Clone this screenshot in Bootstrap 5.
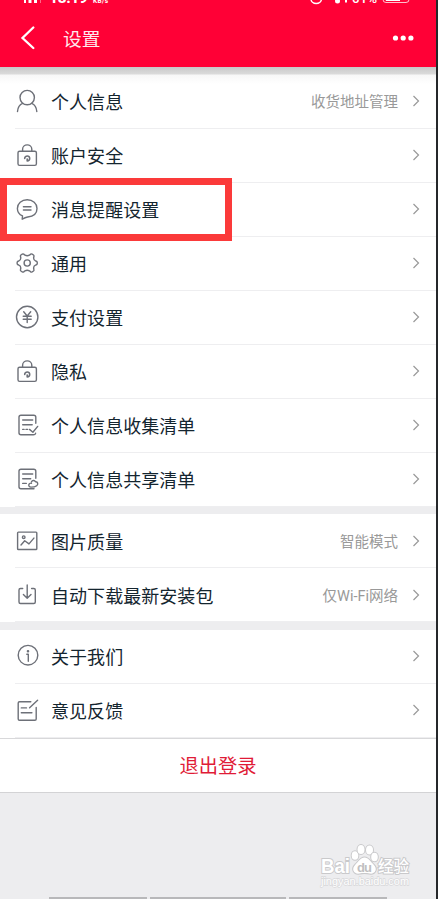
<!DOCTYPE html>
<html lang="zh-CN">
<head>
<meta charset="utf-8">
<meta name="viewport" content="width=device-width, initial-scale=1">
<title>设置</title>
<link href="https://cdn.jsdelivr.net/npm/bootstrap@5.3.0/dist/css/bootstrap.min.css" rel="stylesheet">
<style>
body{font-family:"Noto Sans CJK SC",sans-serif;background:#ededef;color:#14252f}
.phone{height:899px;border-right:2px solid #25272a;background:#ededef}
.topbar{height:67px;background:#ff0036;color:#fff}
.status{height:10px}
.topnav{height:57px;padding:0 22px 2px 20px}
.page-title{font-size:18.7px;line-height:26px;margin-left:27px;color:#ffe9ed}
.topshade{height:8px;background:linear-gradient(#c9c9c9,#dadada 85%,#f3f3f3)}
.firstglow{background:linear-gradient(#f7f7f7,#fff 9px)}
.setting{height:54px;padding:0 16px 2px 15px}
.media-group .setting{padding-bottom:0}
.setting::after{content:"";position:absolute;left:15px;right:0;bottom:0;height:1px;background:#eeeef0}
.setting .ico{width:24px;height:24px;flex:none;margin-right:12px;fill:none;stroke:#6d7078;stroke-width:1.4;stroke-linecap:round;stroke-linejoin:round}
.label{font-size:18px;line-height:26px;letter-spacing:.05px}
.val{font-family:Roboto,"Noto Sans CJK SC",sans-serif;font-size:14.5px;line-height:22px;padding-top:4px;color:#999;margin-right:14px}
.chev{width:8px;height:12px;flex:none;fill:none;stroke:#999;stroke-width:1.2}
.sep{height:8px;background:#ededef}
.sep-first{height:7px}
.logout{height:55px;font-size:19.3px;color:#e01b37;border-top:1px solid #d8d8da;border-bottom:1px solid #d3d3d5;border-radius:0}
.marker{left:0;top:178px;width:232px;height:63px;border:7px solid #fb3a3a}
.brand{left:316px;top:840px}
.navbars{left:49px;bottom:0;gap:3px}
.navbars span{height:2px;background:#b8b8ba}
.w-a{width:98px}.w-b{width:136px}
</style>
<script src="https://cdn.jsdelivr.net/npm/bootstrap@5.3.0/dist/js/bootstrap.bundle.min.js"></script>
</head>
<body class="overflow-hidden">
<svg class="d-none">
<symbol id="user" viewBox="0 0 24 24"><circle cx="12.2" cy="8.6" r="7.2"/><path d="M2.5 22.5c.3-4.2 2-7 5.2-8.2M21.8 22.5c-.3-4.2-2-7-5.2-8.2"/></symbol>
<symbol id="lock" viewBox="0 0 24 24"><rect x="3" y="8.2" width="18.4" height="14.2" rx="1.6"/><path d="M7.6 8V6.200c0-5.800 9.200-5.800 9.200 0V8"/><path d="M9.700 15.400c.1-3.400 5.200-3.200 5 .2 0 1.400-1 2.300-2.500 2.300v-1.800" stroke-width="1.600"/></symbol>
<symbol id="chat" viewBox="0 0 24 24"><path d="M7.200 22.200l.3-3.300C4.400 17.500 2.400 14.700 2.400 11.400C2.400 6.500 6.600 2.800 12.200 2.800S22 6.500 22 11.400c0 5.200-4.300 8-9.300 8.600-2 .3-3.500 1-5.500 2.200z"/><path d="M8.400 9.800h7.600M8.400 13h7.600"/></symbol>
<symbol id="gear" viewBox="0 0 24 24"><circle cx="12.200" cy="12" r="3.100"/><path d="M7.300 3.100Q8 2.700 8.700 3.100L10 4.200Q12.200 5.200 14.400 4.200L15.700 3.100Q16.400 2.700 17.100 3.100L18.500 4Q19.200 4.600 18.900 5.500L18.600 7Q18.700 9.200 20.500 9.900L21.800 10.500Q22.300 11 22.300 12T21.800 13.500L20.500 14.100Q18.700 14.800 18.600 17L18.900 18.500Q19.200 19.400 18.500 20L17.100 20.900Q16.400 21.300 15.700 20.900L14.400 19.800Q12.200 18.800 10 19.800L8.700 20.900Q8 21.300 7.300 20.900L5.900 20Q5.200 19.400 5.500 18.500L5.800 17Q5.700 14.800 3.900 14.100L2.600 13.500Q2.100 13 2.100 12T2.600 10.500L3.900 9.900Q5.700 9.200 5.800 7L5.500 5.500Q5.200 4.600 5.900 4Z"/></symbol>
<symbol id="yen" viewBox="0 0 24 24"><circle cx="12.200" cy="12" r="10.700"/><path d="M8.700 6.800l3.500 4.200 3.500-4.200M12.200 11v6.500M8.200 11.300h8M8.200 14.200h8"/></symbol>
<symbol id="listcheck" viewBox="0 0 24 24"><path d="M20.800 10.300V4.200Q20.800 2.200 18.800 2.200H6Q4 2.200 4 4.200V19.800Q4 21.800 6 21.800H18.300Q20.300 21.800 20.600 20.300M7.700 7h10M7.700 11.700h9.500M7.700 16.400h1.400M11 16.400h1.600M14.500 16.400l3.400 2.800 4.800-5.800"/></symbol>
<symbol id="listshare" viewBox="0 0 24 24"><path d="M20.800 11.200V4.200Q20.800 2.200 18.800 2.200H6Q4 2.200 4 4.200V19.800Q4 21.800 6 21.800H19M7.700 7h10M7.700 11.700h8M7.700 16.400h3.600"/><path d="M16.500 14.700c1-2 3.300-1.300 4 .1 2.500-.2 2.900 2.700 1.200 3.900-1.600 1.300-3.900 1.400-5.700 1.400-3.500-.1-2.500-4.600.5-3.900"/></symbol>
<symbol id="pic" viewBox="0 0 24 24"><rect x="2.600" y="3.100" width="19.200" height="17.400" rx=".8"/><circle cx="8.700" cy="8.200" r="1.300"/><path d="M6 16l3.700-4.300 4.300 3.200 4.900-5.800"/></symbol>
<symbol id="down" viewBox="0 0 24 24"><path d="M7.700 5.500H5.500Q4 5.500 4 7v12Q4 20.500 5.500 20.500h13.300q1.500 0 1.500-1.500V7q0-1.500-1.500-1.500h-2.200M12.200 2v13.200M8.400 11.500l3.800 3.800 3.800-3.800"/></symbol>
<symbol id="info" viewBox="0 0 24 24"><circle cx="13" cy="11.200" r="9.800"/><path d="M11.800 10.200h1.500v7"/><circle cx="13" cy="7.200" r=".6" fill="#6d7078"/></symbol>
<symbol id="edit" viewBox="0 0 24 24"><path d="M15.800 3.800H4.500Q3.200 3.800 3.200 5.100V20.900Q3.200 22.200 4.500 22.200H19.900Q21.200 22.200 21.200 20.900V9.500M14.600 9.700l8-7.500M6.300 9.900h5.200M6.300 14.800h10.600"/></symbol>
<symbol id="arrow" viewBox="0 0 8 12"><path d="M1.500 1l5 5-5 5"/></symbol>
</svg>
<main class="phone position-relative overflow-hidden">
<header class="topbar">
<svg class="status d-block w-100" viewBox="0 0 436 10" preserveAspectRatio="xMinYMin" fill="#fff">
<path d="M24 0h2v3h-2zM28.500 0h3v3h-3zM34 0h3v3h-3z"/><path d="M40 0h1v3h-1z" opacity=".4"/>
<text x="49" y="3" font-family="Roboto" font-weight="700" font-size="16" textLength="39">18:19</text>
<text x="93" y="3" font-family="Roboto" font-weight="700" font-size="6.500" textLength="15">KB/s</text>
<path d="M311 -1a5.200 4.500 0 0 0 10.400 0" fill="none" stroke="#fff" stroke-width="1.500"/>
<circle cx="337.500" cy="1" r="2.500"/><path d="M345 0h2v2.500h-2z"/>
<text x="352" y="2.500" font-family="Roboto" font-weight="500" font-size="13" textLength="25">61%</text>
<rect x="383" y="-7" width="26" height="9.500" rx="3" fill="none" stroke="#fff" stroke-opacity=".75"/><path d="M385 -2h15v3h-14z"/>
</svg>
<div class="topnav d-flex align-items-center">
<svg width="16" height="24" viewBox="0 0 16 24" fill="none" stroke="#fff" stroke-width="2.300" stroke-linecap="round"><path d="M13.300 1.500L2.500 12l10.800 10"/></svg>
<h1 class="page-title fw-normal mb-0">设置</h1>
<svg class="ms-auto" width="22" height="6" viewBox="0 0 22 6" fill="#fff"><circle cx="3.500" cy="3" r="2.600"/><circle cx="11.200" cy="3" r="2.600"/><circle cx="18.900" cy="3" r="2.600"/></svg>
</div>
</header>
<div class="topshade"></div>
<section class="bg-white">
<div class="setting firstglow position-relative d-flex align-items-center"><svg class="ico"><use href="#user"/></svg><span class="label">个人信息</span><span class="val ms-auto">收货地址管理</span><svg class="chev"><use href="#arrow"/></svg></div>
<div class="setting position-relative d-flex align-items-center"><svg class="ico"><use href="#lock"/></svg><span class="label">账户安全</span><svg class="chev ms-auto"><use href="#arrow"/></svg></div>
<div class="setting position-relative d-flex align-items-center"><svg class="ico"><use href="#chat"/></svg><span class="label">消息提醒设置</span><svg class="chev ms-auto"><use href="#arrow"/></svg></div>
<div class="setting position-relative d-flex align-items-center"><svg class="ico"><use href="#gear"/></svg><span class="label">通用</span><svg class="chev ms-auto"><use href="#arrow"/></svg></div>
<div class="setting position-relative d-flex align-items-center"><svg class="ico"><use href="#yen"/></svg><span class="label">支付设置</span><svg class="chev ms-auto"><use href="#arrow"/></svg></div>
<div class="setting position-relative d-flex align-items-center"><svg class="ico"><use href="#lock"/></svg><span class="label">隐私</span><svg class="chev ms-auto"><use href="#arrow"/></svg></div>
<div class="setting position-relative d-flex align-items-center"><svg class="ico"><use href="#listcheck"/></svg><span class="label">个人信息收集清单</span><svg class="chev ms-auto"><use href="#arrow"/></svg></div>
<div class="setting position-relative d-flex align-items-center"><svg class="ico"><use href="#listshare"/></svg><span class="label">个人信息共享清单</span><svg class="chev ms-auto"><use href="#arrow"/></svg></div>
</section>
<div class="sep sep-first"></div>
<section class="bg-white media-group">
<div class="setting position-relative d-flex align-items-center"><svg class="ico"><use href="#pic"/></svg><span class="label">图片质量</span><span class="val ms-auto">智能模式</span><svg class="chev"><use href="#arrow"/></svg></div>
<div class="setting position-relative d-flex align-items-center"><svg class="ico"><use href="#down"/></svg><span class="label">自动下载最新安装包</span><span class="val ms-auto">仅Wi-Fi网络</span><svg class="chev"><use href="#arrow"/></svg></div>
</section>
<div class="sep"></div>
<section class="bg-white">
<div class="setting position-relative d-flex align-items-center"><svg class="ico"><use href="#info"/></svg><span class="label">关于我们</span><svg class="chev ms-auto"><use href="#arrow"/></svg></div>
<div class="setting position-relative d-flex align-items-center"><svg class="ico"><use href="#edit"/></svg><span class="label">意见反馈</span><svg class="chev ms-auto"><use href="#arrow"/></svg></div>
</section>
<button type="button" class="logout d-flex w-100 align-items-center justify-content-center bg-white border-start-0 border-end-0 p-0">退出登录</button>
<div class="marker position-absolute"></div>
<svg class="brand position-absolute" width="100" height="50" viewBox="0 0 100 50" fill="#fff" stroke="#c9c9cb" stroke-width="2" paint-order="stroke" font-family="Liberation Sans">
<ellipse cx="39" cy="15.500" rx="3.300" ry="4.300"/><ellipse cx="45" cy="9.500" rx="3.500" ry="4.500"/><ellipse cx="53.500" cy="10" rx="3.500" ry="4.500"/><ellipse cx="58.500" cy="17" rx="3.300" ry="4.300"/>
<path d="M48.500 17.500c4 0 6 4 9 7 5 5 1 10-4 9-3-.6-7-.6-10 0-5 1-9-4-4-9 3-3 5-7 9-7z"/>
<text x="5" y="33" font-weight="700" font-size="21" textLength="29" lengthAdjust="spacingAndGlyphs">Bai</text>
<text x="41" y="32" font-weight="700" font-size="13" textLength="15" fill="#bfbfc1" stroke="none">du</text>
<text x="62" y="32" font-family="Noto Sans CJK SC" font-weight="500" font-size="15.500" textLength="31">经验</text>
<text x="5" y="45" font-size="10.500" textLength="88" lengthAdjust="spacingAndGlyphs" stroke="#d8d8da" stroke-width="1.300">jingyan.baidu.com</text>
</svg>
<div class="navbars position-absolute d-flex"><span class="w-a"></span><span class="w-b"></span><span class="w-a"></span></div>
</main>
</body>
</html>
